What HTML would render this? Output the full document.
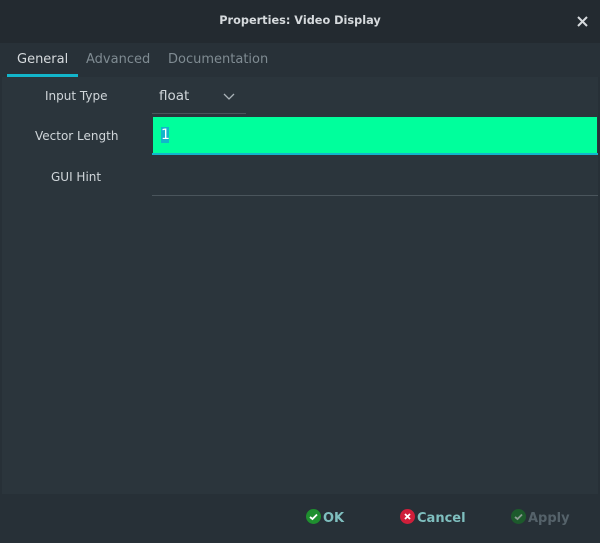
<!DOCTYPE html>
<html><head><style>
body{margin:0;width:600px;height:543px;background:#273037;font-family:"Liberation Sans","DejaVu Sans",sans-serif;position:relative;overflow:hidden}
.t{position:absolute;left:0;top:0;width:600px;height:43px;background:#232a30}
.title{position:absolute;top:14px;width:600px;text-align:center;color:#d6dadd;font-size:11.3px;font-weight:bold;font-family:"DejaVu Sans",sans-serif}
.tabs{position:absolute;top:43px;left:0;width:600px;height:34px;background:#283138}
.tab{position:absolute;top:9px;font-size:13px;font-family:"DejaVu Sans",sans-serif;color:#7f8b92}
.panel{position:absolute;left:2px;top:77px;width:596px;height:417px;background:#2b353c}
.lbl{position:absolute;font-size:12px;color:#d0d6da;font-family:"DejaVu Sans",sans-serif}
.btn{position:absolute;top:509px;font-size:13px;font-weight:bold;font-family:"DejaVu Sans",sans-serif}
.ic{display:inline-block;width:15px;height:15px;border-radius:50%;vertical-align:-2px;margin-right:2px;position:relative}
</style></head><body>
<div class="t"><div class="title">Properties: Video Display</div>
<svg style="position:absolute;left:577px;top:16px" width="11" height="11"><path d="M1 1L10 10M10 1L1 10" stroke="#d6dadd" stroke-width="2"/></svg></div>
<div class="tabs">
<div class="tab" style="left:17px;color:#d6dadd">General</div>
<div class="tab" style="left:86px">Advanced</div>
<div class="tab" style="left:168px">Documentation</div>
<div style="position:absolute;left:7px;top:31px;width:71px;height:3px;background:#12b5cb"></div>
</div>
<div class="panel"></div>
<div class="lbl" style="left:45px;top:89px">Input Type</div>
<div class="lbl" style="left:159px;top:88px;font-size:13.5px">float</div>
<svg style="position:absolute;left:223px;top:93px" width="12" height="8"><path d="M1 1L6 6L11 1" stroke="#aab3b8" stroke-width="1.3" fill="none"/></svg>
<div style="position:absolute;left:152px;top:113px;width:94px;height:1px;background:#4a555c"></div>
<div class="lbl" style="left:35px;top:129px">Vector Length</div>
<div style="position:absolute;left:153px;top:117px;width:444px;height:36px;background:#00ff9c"></div>
<div style="position:absolute;left:152px;top:153px;width:446px;height:2px;background:#12b5cb"></div>
<div style="position:absolute;left:161px;top:127px;width:8px;height:16px;background:#12b5cb;color:#fff;font-size:14px;line-height:16px;font-family:'DejaVu Sans',sans-serif">1</div>
<div class="lbl" style="left:51px;top:170px">GUI Hint</div>
<div style="position:absolute;left:152px;top:195px;width:446px;height:1px;background:#4a555c"></div>
<div class="btn" style="left:306px;color:#7fbfbf"><span class="ic" style="background:#1f8f2f"><svg width="15" height="15" style="position:absolute;left:0;top:0"><path d="M4 8L6.5 10L11 5.5" stroke="#fff" stroke-width="1.8" fill="none"/></svg></span>OK</div>
<div class="btn" style="left:400px;color:#7fbfbf"><span class="ic" style="background:#cf1f3a"><svg width="15" height="15" style="position:absolute;left:0;top:0"><path d="M5 5L10 10M10 5L5 10" stroke="#fff" stroke-width="1.8"/></svg></span>Cancel</div>
<div class="btn" style="left:511px;color:#55626a"><span class="ic" style="background:#1d5a2c"><svg width="15" height="15" style="position:absolute;left:0;top:0"><path d="M4 8L6.5 10L11 5.5" stroke="#8a9a92" stroke-width="1.8" fill="none"/></svg></span>Apply</div>
</body></html>
